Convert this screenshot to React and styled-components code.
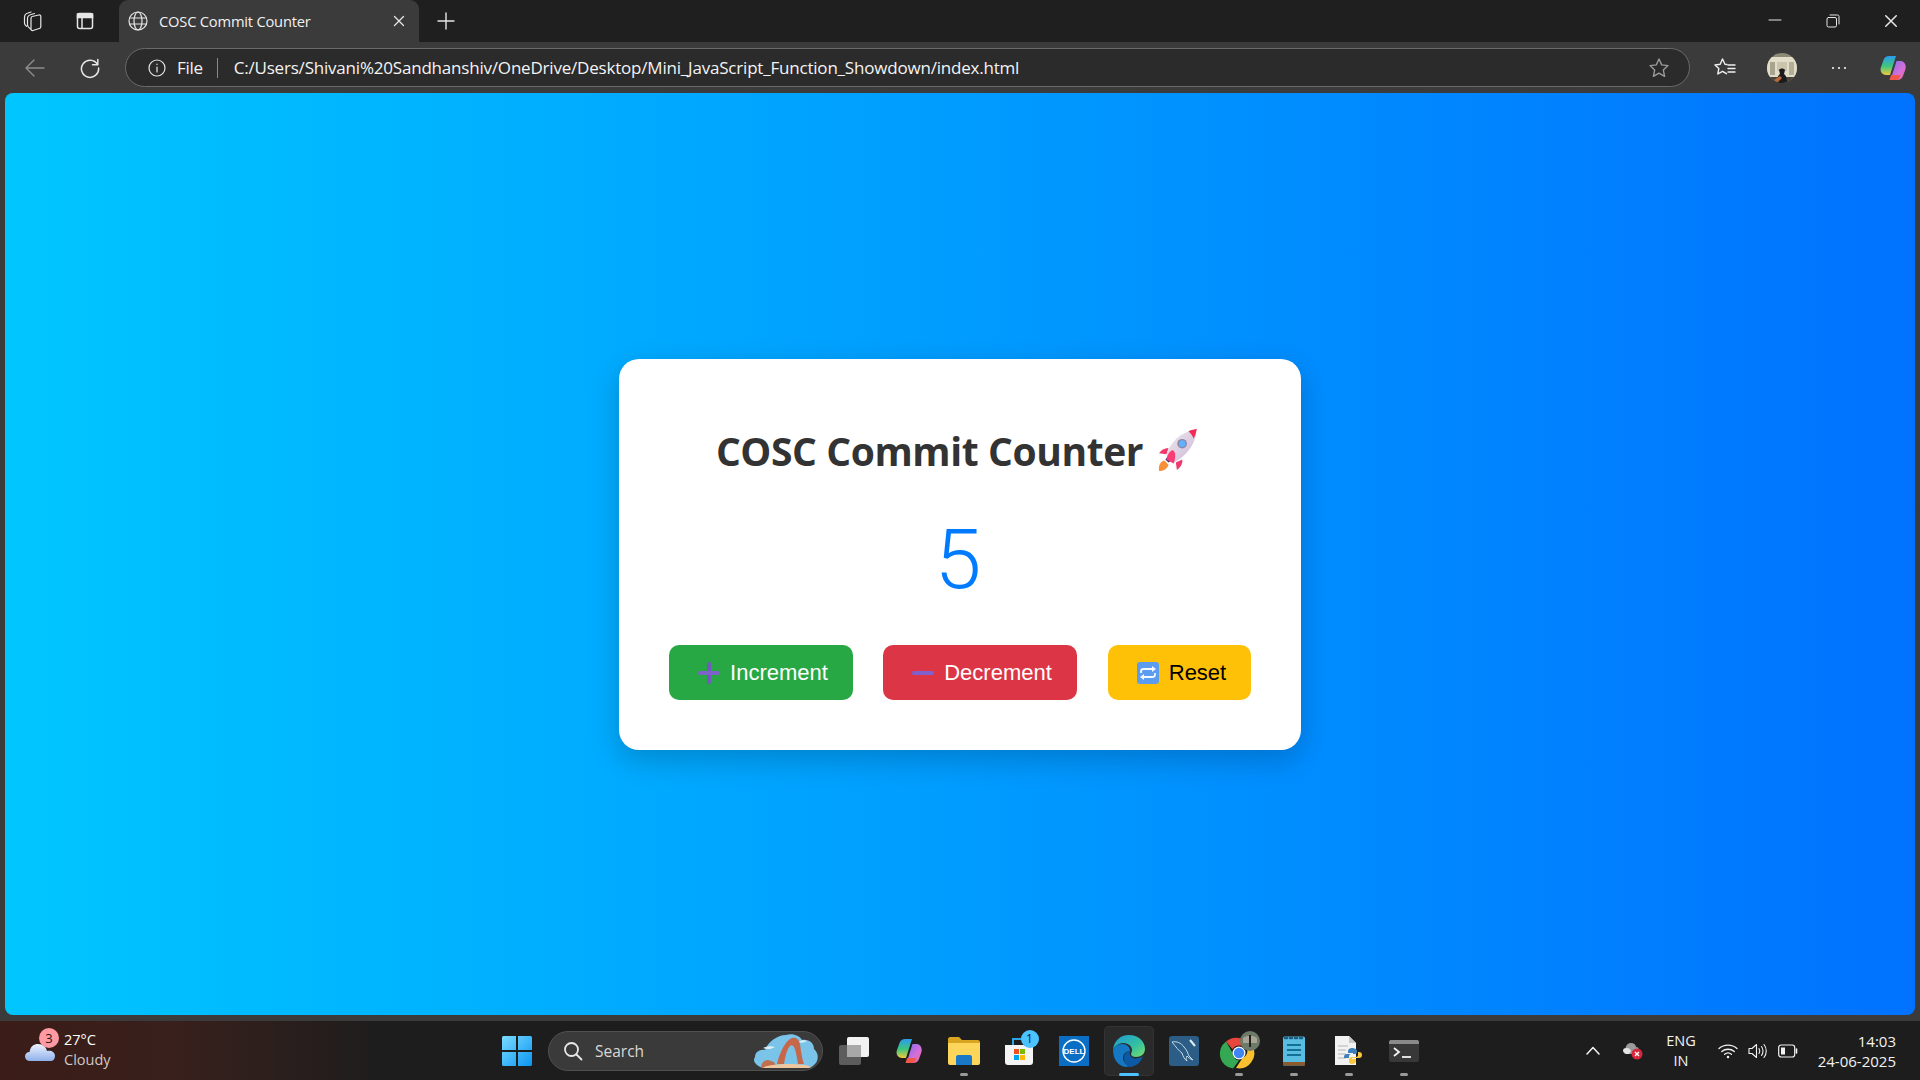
import React, { useState } from 'react'
import styled, { createGlobalStyle } from 'styled-components'

const GlobalStyle = createGlobalStyle`
  html, body { margin: 0; padding: 0; height: 100%; background: #3b3b3b; overflow: hidden; }
  #root { height: 100%; }
  * { box-sizing: border-box; }
`

const Shell = styled.div`
  display: flex;
  flex-direction: column;
  height: 1080px;
  font-family: "Open Sans", "Noto Sans", sans-serif;
  color: #fff;
  background: #3b3b3b;
`

/* browser chrome */
const TabStrip = styled.div`
  display: flex;
  align-items: center;
  height: 42px;
  padding-left: 11px;
  background: #1f1f1f;
`
const ChromeSlot = styled.div`
  display: flex;
  align-items: center;
  justify-content: center;
  flex: none;
  width: ${p => p.$w || 42}px;
  margin-right: ${p => p.$gap || 0}px;
  height: 100%;
  svg { display: block; }
`
const Tab = styled.div`
  display: flex;
  align-items: center;
  width: 300px;
  height: 42px;
  margin-left: 2px;
  padding: 0 14px 0 8px;
  border-radius: 9px 9px 0 0;
  background: #3b3b3b;
  gap: 10px;
`
const TabTitle = styled.span`
  flex: 1;
  font-size: 14.7px;
  letter-spacing: -0.2px;
  color: #f0f0f0;
`
const WindowControls = styled.div`
  display: flex;
  margin-left: auto;
  height: 100%;
`
const Toolbar = styled.div`
  display: flex;
  align-items: center;
  height: 51px;
  padding: 0 0 0 13px;
  background: #3b3b3b;
`
const AddressBar = styled.div`
  display: flex;
  align-items: center;
  width: 1565px;
  height: 39px;
  margin-left: 2px;
  padding: 0 19px 0 21px;
  border: 1px solid #6a6a6a;
  border-radius: 20px;
  background: #2b2b2b;
  flex: none;
`
const SchemeLabel = styled.span`
  margin-left: 10px;
  font-size: 17px;
  letter-spacing: -0.3px;
  color: #f2f2f2;
`
const Divider = styled.span`
  width: 1px;
  height: 20px;
  margin: 0 16px 0 14px;
  background: #8a8a8a;
`
const UrlText = styled.span`
  flex: 1;
  font-size: 17px;
  letter-spacing: -0.2px;
  color: #f4f4f4;
  white-space: nowrap;
`

/* page */
const Viewport = styled.main`
  flex: 1;
  display: flex;
  align-items: center;
  justify-content: center;
  margin: 0 5px 6px;
  padding-top: 1px;
  border-radius: 8px;
  background: linear-gradient(to right, #00c6ff, #0072ff);
`
const Card = styled.section`
  display: flex;
  flex-direction: column;
  align-items: center;
  width: 682px;
  height: 391px;
  padding: 50px;
  border-radius: 20px;
  background: #fff;
  box-shadow: 0 10px 30px rgba(0, 0, 0, 0.2);
`
const Heading = styled.h1`
  display: flex;
  align-items: center;
  margin: 16px 3px 0 0;
  font-family: "Open Sans", sans-serif;
  font-size: 39px;
  line-height: 52px;
  font-weight: 700;
  letter-spacing: -0.4px;
  color: #333;
  white-space: nowrap;
  svg { margin-left: 14px; margin-top: -3px; }
`
const Count = styled.div`
  margin: 30px 4px 0 0;
  font-family: "Roboto", sans-serif;
  font-size: 84px;
  line-height: 106px;
  font-weight: 300;
  color: #007bff;
`
const ButtonRow = styled.div`
  display: flex;
  gap: 30px;
  align-self: stretch;
  margin-top: auto;
  button:last-child { margin-left: auto; }
`
const ActionButton = styled.button`
  display: flex;
  align-items: center;
  justify-content: center;
  gap: 10px;
  width: ${p => p.$w}px;
  height: 55px;
  padding: 0 0 0 4px;
  border: 0;
  border-radius: 10px;
  background: ${p => p.$bg};
  color: ${p => p.$fg};
  font-family: "Liberation Sans", Arial, sans-serif;
  font-size: 22px;
  cursor: pointer;
`

/* taskbar */
const Taskbar = styled.footer`
  display: flex;
  align-items: center;
  height: 59px;
  background: linear-gradient(to right, #3b1c18 0, #38201c 180px, #1d1d1d 380px);
`
const Weather = styled.div`
  position: relative;
  display: flex;
  align-items: center;
  width: 492px;
  height: 100%;
  padding-left: 25px;
  flex: none;
`
const WeatherBadge = styled.span`
  position: absolute;
  left: 39px;
  top: 7px;
  width: 20px;
  height: 20px;
  border-radius: 50%;
  background: #ff9aa2;
  color: #2a1414;
  font-size: 13px;
  line-height: 20px;
  text-align: center;
`
const WeatherText = styled.div`
  display: flex;
  flex-direction: column;
  margin: -2px 0 0 9px;
  font-size: 14.5px;
  line-height: 20px;
  span:last-child { color: #cfc9c7; }
`
const TaskSlot = styled.div`
  position: relative;
  display: flex;
  align-items: center;
  justify-content: center;
  flex: none;
  width: 50px;
  height: 50px;
  margin: 0 ${p => (p.$flush ? 0 : 2.5)}px;
  border-radius: 5px;
  ${p => p.$active && 'background: #2a2a2a; box-shadow: inset 0 0 0 1px #333;'}
  svg { overflow: visible; }
`
const RunDot = styled.span`
  position: absolute;
  left: 50%;
  bottom: 0;
  width: ${p => (p.$active ? 20 : 8)}px;
  height: 3px;
  border-radius: 2px;
  transform: translateX(-50%);
  background: ${p => (p.$active ? '#4cc2ff' : '#9a9a9a')};
`
const CountBadge = styled.span`
  position: absolute;
  right: 5px;
  top: 4px;
  width: 18px;
  height: 18px;
  border-radius: 50%;
  background: #4cc2ff;
  color: #10232e;
  font-size: 12px;
  line-height: 18px;
  text-align: center;
`
const SearchBox = styled.div`
  position: relative;
  display: flex;
  align-items: center;
  flex: none;
  width: 275px;
  height: 40px;
  margin: 0 3px 0 6px;
  padding-left: 14px;
  border: 1px solid #505050;
  border-radius: 20px;
  background: #3a3a3a;
  svg.art { position: absolute; right: 3px; top: 2px; }
`
const SearchLabel = styled.span`
  margin-left: 12px;
  font-size: 15.5px;
  color: #d8d8d8;
`
const Tray = styled.div`
  display: flex;
  align-items: center;
  flex: 1;
  height: 100%;
  padding: 0 24px 0 0;
`
const TrayIcon = styled.div`
  display: flex;
  justify-content: center;
  flex: none;
  width: ${p => p.$w}px;
  margin-left: ${p => p.$ml || 0}px;
`
const LangBox = styled.div`
  flex: none;
  width: 44px;
  margin-left: 16px;
  font-size: 14.5px;
  line-height: 20px;
  text-align: center;
  color: #f2f2f2;
`
const Clock = styled.div`
  margin-left: auto;
  font-size: 15px;
  line-height: 20px;
  text-align: right;
  color: #f2f2f2;
`

/* icons */
const Stroke = ({ w = 20, h = 20, vb, sw = 1.4, c = '#e6e6e6', children }) => (
  <svg width={w} height={h} viewBox={vb || `0 0 ${w} ${h}`} fill="none" stroke={c} strokeWidth={sw} strokeLinecap="round" strokeLinejoin="round">
    {children}
  </svg>
)

const Rocket = () => (
  <svg width="44" height="44" viewBox="0 0 42 42">
    <defs>
      <linearGradient id="rb" x1="0" y1="0" x2="1" y2="1">
        <stop offset="0" stopColor="#f3edf0" />
        <stop offset="1" stopColor="#c8b4d6" />
      </linearGradient>
    </defs>
    <path d="M2 41c-1-5 1-9 5-10l4 4c-1 4-5 6-9 6z" fill="#f7923a" />
    <path d="M9 25l-7-1c2-3 5-5 9-5z" fill="#f0386b" />
    <path d="M18 33l1 7c3-2 6-6 5-10z" fill="#f0386b" />
    <path d="M11 33l-3-3 3-4 4 4z" fill="#4a2f7a" />
    <path d="M9 26C12 14 22 4 38 1c-1 16-12 27-22 32z" fill="url(#rb)" />
    <path d="M30 3c3-1 6-2 8-2-1 3-1 6-3 9-1-3-3-5-5-7z" fill="#f42c55" />
    <path d="M9 30c1-5 3-8 6-9 3 2 3 6 1 13l-2-1z" fill="#fb3b73" />
    <circle cx="24" cy="15" r="4.6" fill="#8e86a0" />
    <circle cx="24" cy="15" r="3.2" fill="#62b0ff" />
  </svg>
)

const PlusEmoji = () => (
  <svg width="22" height="22" viewBox="0 0 22 22">
    <rect x="9" y="0" width="4" height="22" rx="2" fill="#7558c0" />
    <rect x="0" y="9" width="22" height="4" rx="2" fill="#7d62c8" />
  </svg>
)
const MinusEmoji = () => (
  <svg width="22" height="22" viewBox="0 0 22 22">
    <rect x="0" y="9" width="22" height="4" rx="2" fill="#7f60cc" />
  </svg>
)
const RepeatEmoji = () => (
  <svg width="22" height="22" viewBox="0 0 22 22">
    <rect width="22" height="22" rx="3" fill="#5b9cf0" />
    <g fill="none" stroke="#f4f8ff" strokeWidth="1.8" strokeLinejoin="round">
      <path d="M4 11V9.5C4 8 5 7 6.5 7H16" />
      <path d="M18 11v1.5c0 1.500-1 2.500-2.500 2.500H6" />
    </g>
    <path d="M15 4l4 3-4 3zM7 12l-4 3 4 3z" fill="#f4f8ff" />
  </svg>
)

const WorkspacesIcon = () => (
  <Stroke w={22} h={22} sw={1.2}>
    <path d="M3.500 13V7.500C3.500 5 5 3.500 7 3l3-1" />
    <path d="M6.500 15V8.500C6.500 6.500 8 5 10 4.500l3.500-1" />
    <path d="M11 6.500l7-1.500c1-.2 1.800.5 1.800 1.500v10c0 1-.5 1.700-1.500 2l-6.300 2c-1.200.3-2-.4-2-1.500V8.500c0-1 .4-1.800 1-2z" />
    <path d="M3.500 13c0 1.200.8 2.400 2 3.300M6.500 15c0 1.200.8 2.500 3 4" />
  </Stroke>
)
const TabsIcon = () => (
  <svg width="20" height="20" viewBox="0 0 20 20" fill="none" stroke="#e6e6e6" strokeWidth="1.5">
    <rect x="2.500" y="2.500" width="15" height="15" rx="2" />
    <path d="M2.500 3h15v3.500h-15z" fill="#e6e6e6" />
    <path d="M7 6v11" />
  </svg>
)
const GlobeIcon = () => (
  <Stroke w={22} h={22} sw={1.2}>
    <circle cx="11" cy="11" r="9" />
    <ellipse cx="11" cy="11" rx="4" ry="9" />
    <path d="M2.500 8h17M2.500 14h17" />
  </Stroke>
)
const CloseIcon = ({ size = 12 }) => (
  <Stroke w={size} h={size} sw={1.3} vb="0 0 12 12">
    <path d="M1.500 1.500l9 9M10.500 1.500l-9 9" />
  </Stroke>
)
const PlusIcon = () => (
  <Stroke w={18} h={18} sw={1.4}>
    <path d="M9 1v16M1 9h16" />
  </Stroke>
)
const MinIcon = () => (
  <Stroke w={14} h={14} sw={1}>
    <path d="M1 6h12" />
  </Stroke>
)
const RestoreIcon = () => (
  <Stroke w={14} h={14} sw={1}>
    <rect x="1" y="3.500" width="9.500" height="9.500" rx="1.500" />
    <path d="M4 1h7.500c1 0 1.500.5 1.500 1.500V10" />
  </Stroke>
)
const BackIcon = () => (
  <Stroke w={22} h={22} c="#8d8d8d" sw={1.4}>
    <path d="M20 11H2M10 3l-8 8 8 8" />
  </Stroke>
)
const ReloadIcon = () => (
  <Stroke w={22} h={22} sw={1.5}>
    <path d="M18.500 7.500A8.600 8.600 0 1 0 19.600 11" />
    <path d="M18.800 2.500v5.300h-5.300" />
  </Stroke>
)
const InfoIcon = () => (
  <Stroke w={20} h={20} sw={1.2}>
    <circle cx="10" cy="10" r="8" />
    <path d="M10 9v5M10 6.100v.3" />
  </Stroke>
)
const StarIcon = ({ c = '#9a9a9a' }) => (
  <Stroke w={22} h={22} c={c} sw={1.4}>
    <path d="M11 2l2.700 5.900 6.300.7-4.700 4.300 1.300 6.400L11 16.100l-5.600 3.200 1.300-6.400L2 8.600l6.300-.7z" />
  </Stroke>
)
const FavoritesIcon = () => (
  <Stroke w={22} h={22} c="#f0f0f0" sw={1.4}>
    <path d="M13 7.500l-2-.3L8.500 2 6.200 7.200 1 8l3.800 3.600L3.800 17l4.700-2.700 4 2.400" />
    <path d="M14 8h7M14 11.500h7M14 15h7" />
  </Stroke>
)
const Avatar = () => (
  <svg width="30" height="30" viewBox="0 0 30 30">
    <defs><clipPath id="av"><circle cx="15" cy="15" r="15" /></clipPath></defs>
    <g clipPath="url(#av)">
      <rect width="30" height="30" fill="#8e8a78" />
      <rect y="4" width="30" height="20" fill="#e2ddc8" />
      <rect x="3" y="9" width="5" height="13" fill="#a9a48e" />
      <rect x="22" y="9" width="5" height="13" fill="#b3ae98" />
      <rect x="10" y="9" width="10" height="9" fill="#c9c4ac" />
      <rect y="24" width="30" height="6" fill="#4a443c" />
      <path d="M10 30c0-5 1-8 3-9l-1-4c1-2 5-2 6 0l-1 4c2 1 3 4 3 9z" fill="#1c1a1a" />
      <path d="M7 27l6-4 2 2-5 5z" fill="#b8683a" />
    </g>
  </svg>
)
const CopilotIcon = ({ size = 28, id = 'cp' }) => (
  <svg width={size} height={size} viewBox="0 0 28 28">
    <defs>
      <linearGradient id={`${id}a`} x1="0" y1="0" x2="0" y2="1">
        <stop offset="0" stopColor="#2a9bf0" />
        <stop offset=".55" stopColor="#40c77a" />
        <stop offset="1" stopColor="#f4c93c" />
      </linearGradient>
      <linearGradient id={`${id}b`} x1="0" y1="0" x2="1" y2="1">
        <stop offset="0" stopColor="#7c6df0" />
        <stop offset=".6" stopColor="#d76fd8" />
        <stop offset="1" stopColor="#f06a8a" />
      </linearGradient>
    </defs>
    <path d="M10 2h7l-6 19H7c-4 0-6.500-4-5-8l2.500-7C5.500 3.500 7.500 2 10 2z" fill={`url(#${id}a)`} />
    <path d="M18 7h4c3 0 5.500 4 4.500 8l-2.500 7c-1 2.500-3 4-5.500 4h-7l6-19z" fill={`url(#${id}b)`} />
    <path d="M10.500 26h7c1.500 0 2.500-1 3-2.500l.8-2.500H12z" fill="#f2584a" />
  </svg>
)
const CloudIcon = () => (
  <svg width="30" height="22" viewBox="0 0 30 22">
    <defs>
      <linearGradient id="cl" x1="0" y1="0" x2="0" y2="1">
        <stop offset="0" stopColor="#eef3ff" />
        <stop offset="1" stopColor="#8fb0ea" />
      </linearGradient>
    </defs>
    <path d="M5 21C2 21 0 19 0 16.500S2 12 4.500 12C5.500 6 9 4 13 4c5 0 8 3 9 7 4-1 8 1 8 5 0 3-2 5-4 5z" fill="url(#cl)" />
  </svg>
)
const StartIcon = () => (
  <svg width="30" height="30" viewBox="0 0 30 30">
    <defs>
      <linearGradient id="win" x1="0" y1="0" x2="1" y2="1">
        <stop offset="0" stopColor="#7bdcff" />
        <stop offset="1" stopColor="#0a94f2" />
      </linearGradient>
    </defs>
    <path d="M0 1.500A1.500 1.500 0 0 1 1.500 0H14v14H0zM16 0h12.500A1.500 1.500 0 0 1 30 1.500V14H16zM0 16h14v14H1.500A1.500 1.500 0 0 1 0 28.500zM16 16h14v12.500a1.500 1.500 0 0 1-1.500 1.500H16z" fill="url(#win)" />
  </svg>
)
const SearchGlass = () => (
  <Stroke w={20} h={20} c="#e8e8e8" sw={1.8}>
    <circle cx="8.500" cy="8.500" r="6.500" />
    <path d="M13.500 13.500l5 5" />
  </Stroke>
)
const ArchArt = () => (
  <svg className="art" width="66" height="34" viewBox="0 0 66 34">
    <path d="M10 34C3 32-1 27 2 23c0-5 5-8 10-7 3-8 12-15 21-15 7-2 14 1 16 5 7-1 12 3 12 9 5 4 5 12 0 16-2 2-4 3-7 3z" fill="#79c4e8" />
    <path d="M10 14c4-2 9-2 12-1-3 2-8 3-12 1zM45 8c3-2 7-2 9-1-3 2-6 2-9 1z" fill="#dceef6" />
    <path d="M8 34c0-5 3-8 7-8l6 2 3 6z" fill="#c0704f" />
    <path d="M24 30c2-9 7-21 13-25 5-3 9 0 10 5 1 7 2 15 4 20h-6c-1-6-2-13-4-17-2-3-4-2-6 2-2 4-3 9-4 15z" fill="#c7674a" />
    <path d="M10 34c2-4 40-6 48-1l-2 1z" fill="#efc79e" />
  </svg>
)
const TaskViewIcon = () => (
  <svg width="30" height="28" viewBox="0 0 30 28">
    <rect x="0" y="8" width="22" height="20" rx="2" fill="#5c5c5c" />
    <rect x="8" y="0" width="22" height="20" rx="2" fill="#f2f2f2" />
    <rect x="8" y="8" width="14" height="12" fill="#a8a8a8" />
  </svg>
)
const ExplorerIcon = () => (
  <svg width="32" height="28" viewBox="0 0 32 28">
    <path d="M0 2c0-1 1-2 2-2h9l3 3h16c1 0 2 1 2 2v3H0z" fill="#d9a520" />
    <path d="M0 6h32v20c0 1-1 2-2 2H2c-1 0-2-1-2-2z" fill="#fbd65a" />
    <path d="M8 20c0-1 1-2 2-2h12c1 0 2 1 2 2v8H8z" fill="#1a78c8" />
  </svg>
)
const StoreIcon = () => (
  <svg width="30" height="30" viewBox="0 0 30 30">
    <path d="M9 9V3h14v6" fill="none" stroke="#2aa6e8" strokeWidth="2" />
    <path d="M1 9h28v17c0 2-1 3-3 3H4c-2 0-3-1-3-3z" fill="#f4f4f4" />
    <rect x="10" y="13" width="5" height="5" fill="#f25022" />
    <rect x="16" y="13" width="5" height="5" fill="#7fba00" />
    <rect x="10" y="19" width="5" height="5" fill="#00a4ef" />
    <rect x="16" y="19" width="5" height="5" fill="#ffb900" />
  </svg>
)
const DellIcon = () => (
  <svg width="30" height="30" viewBox="0 0 30 30">
    <rect width="30" height="30" fill="#0a6fc4" />
    <circle cx="15" cy="15" r="11" fill="none" stroke="#fff" strokeWidth="1.4" />
    <text x="15" y="18" textAnchor="middle" fontSize="8" fontWeight="700" fontFamily="Liberation Sans" fill="#fff">DELL</text>
  </svg>
)
const EdgeIcon = () => (
  <svg width="32" height="32" viewBox="0 0 32 32">
    <defs>
      <linearGradient id="eg" x1="0" y1="0" x2="1" y2="1">
        <stop offset="0" stopColor="#1e9ad8" />
        <stop offset=".6" stopColor="#35c1a0" />
        <stop offset="1" stopColor="#7de06a" />
      </linearGradient>
    </defs>
    <path d="M16 0c9 0 16 6 16 14 0 5-4 8-9 8-3 0-5-1-5-3 0-1 1-2 1-4 0-4-4-7-9-7-4 0-8 3-10 7C1 6 7 0 16 0z" fill="url(#eg)" />
    <path d="M0 15c2-4 5-6 9-6 5 0 8 3 8 7-4 0-7 3-7 7 0 3 2 6 6 8-1 0-1 0-2 1C6 32 0 25 0 15z" fill="#1478c4" />
    <path d="M11 22c0-3 3-6 6-6 0 2-1 3 0 4 1 3 5 4 8 3 2 0 4-1 5-2-2 7-8 11-14 11-4-2-5-6-5-10z" fill="#0c5aa6" />
  </svg>
)
const MysqlIcon = () => (
  <svg width="30" height="30" viewBox="0 0 30 30">
    <rect width="30" height="30" rx="3" fill="#2b5d86" />
    <path d="M3 6c5-1 9 1 12 5 3 3 4 7 5 9l4 4c-3-1-5-3-6-4-1 2-1 3 0 5-3-2-4-5-5-8-3-2-6-6-10-11z" fill="none" stroke="#c7dbe8" strokeWidth="1" />
    <path d="M21 4l5 6" stroke="#e2edf3" strokeWidth="2" />
  </svg>
)
const ChromeIcon = () => (
  <svg width="38" height="38" viewBox="0 0 38 38">
    <g transform="translate(4 6)">
      <path d="M15 0a15 15 0 0 1 13 7.500H15a7.500 7.500 0 0 0-6.500 3.800L2 3.500A15 15 0 0 1 15 0z" fill="#e8453c" />
      <path d="M2 3.500l6.500 11.300A7.500 7.500 0 0 0 15 22.500L9 30.500A15 15 0 0 1 2 3.500z" fill="#35a853" />
      <path d="M28 7.500A15 15 0 0 1 12 30l6.500-10A7.500 7.500 0 0 0 21 7.500z" fill="#fbc02d" />
      <circle cx="15" cy="15" r="6.500" fill="#fff" />
      <circle cx="15" cy="15" r="5.200" fill="#3f86f4" />
    </g>
    <circle cx="30" cy="9" r="10" fill="#6e7a68" />
    <path d="M23 6c4-3 10-3 14 0v5H23z" fill="#a8a596" />
    <rect x="29" y="3" width="2" height="12" fill="#25201e" />
  </svg>
)
const NotepadIcon = () => (
  <svg width="24" height="30" viewBox="0 0 24 30">
    <rect width="22" height="29" x="1" y="0.500" rx="1.500" fill="#58bde0" />
    <rect x="1" y="26" width="22" height="3.500" fill="#8f5a2a" />
    <path d="M5 9h14M5 14h14M5 19h14" stroke="#156f94" strokeWidth="2" />
    <path d="M3 2h2M8 2h2M13 2h2M18 2h2" stroke="#1f5f82" strokeWidth="2.500" strokeLinecap="round" />
  </svg>
)
const PythonFileIcon = () => (
  <svg width="28" height="30" viewBox="0 0 28 30">
    <path d="M0 0h14l7 7v22H0z" fill="#f2f2f2" />
    <path d="M14 0v7h7z" fill="#c8c8c8" />
    <path d="M3 10h10M3 14h8M3 18h8M3 22h8" stroke="#b4b4b4" strokeWidth="1" />
    <path d="M17 12c-2 0-4 1-4 3v2h5v1h-6c-2 0-3 1-3 3v1h5v-2c0-1 1-2 2-2h4c1 0 2-1 2-2v-1c0-2-3-3-5-3z" fill="#3d7fb8" />
    <path d="M17 28c2 0 4-1 4-3v-2h-4v-1h7c2 0 3-1 3-3s-1-3-3-3h-1v3c0 1-1 2-2 2h-4c-2 0-3 1-3 3v1c0 2 1 3 3 3z" fill="#f8c73e" />
  </svg>
)
const TerminalIcon = () => (
  <svg width="30" height="24" viewBox="0 0 30 24">
    <rect width="30" height="22" y="1" rx="2" fill="#383838" />
    <path d="M0 3c0-1 1-2 2-2h26c1 0 2 1 2 2v2H0z" fill="#8a8a8a" />
    <path d="M5 9l5 4-5 4" fill="none" stroke="#f2f2f2" strokeWidth="1.800" />
    <path d="M13 18h9" stroke="#f2f2f2" strokeWidth="1.800" />
  </svg>
)
const OneDriveError = () => (
  <svg width="20" height="18" viewBox="0 0 20 18">
    <path d="M3 12C1 12 0 10 0 8.500S1 6 2.500 6C3 3 5 1 8 1c3 0 5 2 5 4 2 0 3 1 3 3v4z" fill="#9a9a9a" />
    <path d="M0 9c0-2 2-3 4-3 2 0 3 1 4 3l-2 3H3z" fill="#e4e4e4" />
    <circle cx="14" cy="12" r="5.500" fill="#d8263c" />
    <path d="M12 10l4 4M16 10l-4 4" stroke="#fff" strokeWidth="1.300" />
  </svg>
)
const WifiIcon = () => (
  <Stroke w={20} h={16} c="#f2f2f2" sw={1.3}>
    <path d="M1 5.500c5-4.500 13-4.500 18 0M3.800 8.500c3.500-3 9-3 12.500 0M6.600 11.300c2-1.700 4.800-1.700 6.800 0" />
    <circle cx="10" cy="14" r=".6" fill="#f2f2f2" />
  </Stroke>
)
const VolumeIcon = () => (
  <Stroke w={20} h={16} c="#f2f2f2" sw={1.1}>
    <path d="M1 5.500h3L8.500 1.500v13L4 10.500H1z" />
    <path d="M11 5.500c1 1.500 1 3.500 0 5M13.500 3.500c2 2.500 2 6.500 0 9M16 1.500c3 3.500 3 9.500 0 13" />
  </Stroke>
)
const BatteryIcon = () => (
  <svg width="20" height="14" viewBox="0 0 20 14" fill="none">
    <rect x="0.700" y="1" width="16" height="12" rx="2.500" stroke="#f2f2f2" strokeWidth="1.200" />
    <rect x="3" y="3.500" width="4" height="7" fill="#f2f2f2" />
    <path d="M18.500 5v4" stroke="#f2f2f2" strokeWidth="1.600" strokeLinecap="round" />
  </svg>
)
const ChevronUp = () => (
  <Stroke w={14} h={9} c="#f2f2f2" sw={1.500}>
    <path d="M1 8l6-6.500L13 8" />
  </Stroke>
)

const pinned = [
  { key: 'view', icon: <TaskViewIcon /> },
  { key: 'copilot', icon: <CopilotIcon size={28} id="tb" /> },
  { key: 'files', icon: <ExplorerIcon />, running: true },
  { key: 'store', icon: <StoreIcon />, badge: 1 },
  { key: 'dell', icon: <DellIcon /> },
  { key: 'edge', icon: <EdgeIcon />, running: true, active: true },
  { key: 'mysql', icon: <MysqlIcon /> },
  { key: 'chrome', icon: <ChromeIcon />, running: true },
  { key: 'notepad', icon: <NotepadIcon />, running: true },
  { key: 'python', icon: <PythonFileIcon />, running: true },
  { key: 'terminal', icon: <TerminalIcon />, running: true },
]

function App() {
  const [count, setCount] = useState(5)

  return (
    <Shell>
      <GlobalStyle />
      <TabStrip>
        <ChromeSlot $w={42} $gap={11}><WorkspacesIcon /></ChromeSlot>
        <ChromeSlot $w={42} $gap={11}><TabsIcon /></ChromeSlot>
        <Tab>
          <GlobeIcon />
          <TabTitle>COSC Commit Counter</TabTitle>
          <CloseIcon />
        </Tab>
        <ChromeSlot $w={54}><PlusIcon /></ChromeSlot>
        <WindowControls>
          <ChromeSlot $w={58}><MinIcon /></ChromeSlot>
          <ChromeSlot $w={58}><RestoreIcon /></ChromeSlot>
          <ChromeSlot $w={58}><CloseIcon size={14} /></ChromeSlot>
        </WindowControls>
      </TabStrip>

      <Toolbar>
        <ChromeSlot $w={44}><BackIcon /></ChromeSlot>
        <ChromeSlot $w={66}><ReloadIcon /></ChromeSlot>
        <AddressBar>
          <InfoIcon />
          <SchemeLabel>File</SchemeLabel>
          <Divider />
          <UrlText>C:/Users/Shivani%20Sandhanshiv/OneDrive/Desktop/Mini_JavaScript_Function_Showdown/index.html</UrlText>
          <StarIcon />
        </AddressBar>
        <ChromeSlot $w={69}><FavoritesIcon /></ChromeSlot>
        <ChromeSlot $w={45}><Avatar /></ChromeSlot>
        <ChromeSlot $w={69}>
          <Stroke w={16} h={4} c="#eee" sw={2.2}><path d="M2 2h.01M8 2h.01M14 2h.01" /></Stroke>
        </ChromeSlot>
        <ChromeSlot $w={39}><CopilotIcon /></ChromeSlot>
      </Toolbar>

      <Viewport>
        <Card>
          <Heading>COSC Commit Counter <Rocket /></Heading>
          <Count>{count}</Count>
          <ButtonRow>
            <ActionButton $w={184} $bg="#28a745" $fg="#fff" onClick={() => setCount(count + 1)}>
              <PlusEmoji /> Increment
            </ActionButton>
            <ActionButton $w={194} $bg="#dc3545" $fg="#fff" onClick={() => setCount(count - 1)}>
              <MinusEmoji /> Decrement
            </ActionButton>
            <ActionButton $w={143} $bg="#ffc107" $fg="#000" onClick={() => setCount(0)}>
              <RepeatEmoji /> Reset
            </ActionButton>
          </ButtonRow>
        </Card>
      </Viewport>

      <Taskbar>
        <Weather>
          <CloudIcon />
          <WeatherBadge>3</WeatherBadge>
          <WeatherText>
            <span>27°C</span>
            <span>Cloudy</span>
          </WeatherText>
        </Weather>
        <TaskSlot $flush><StartIcon /></TaskSlot>
        <SearchBox>
          <SearchGlass />
          <SearchLabel>Search</SearchLabel>
          <ArchArt />
        </SearchBox>
        {pinned.map(item => (
          <TaskSlot key={item.key} $active={item.active}>
            {item.icon}
            {item.badge && <CountBadge>{item.badge}</CountBadge>}
            {item.running && <RunDot $active={item.active} />}
          </TaskSlot>
        ))}
        <Tray>
          <TrayIcon $w={20} $ml={152}><ChevronUp /></TrayIcon>
          <TrayIcon $w={20} $ml={20}><OneDriveError /></TrayIcon>
          <LangBox>ENG<br />IN</LangBox>
          <TrayIcon $w={20} $ml={15}><WifiIcon /></TrayIcon>
          <TrayIcon $w={20} $ml={10}><VolumeIcon /></TrayIcon>
          <TrayIcon $w={20} $ml={10}><BatteryIcon /></TrayIcon>
          <Clock>14:03<br />24-06-2025</Clock>
        </Tray>
      </Taskbar>
    </Shell>
  )
}

export default App
